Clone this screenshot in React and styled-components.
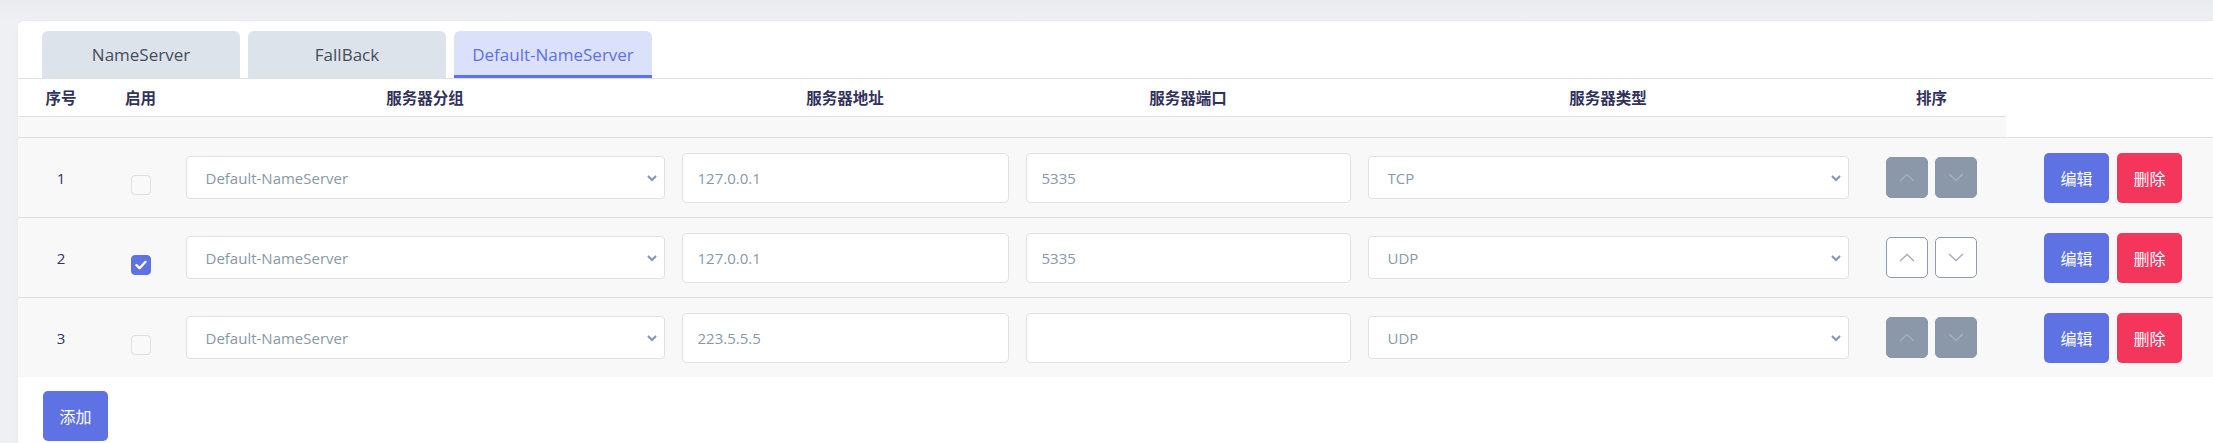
import React from "react";
import styled, { createGlobalStyle } from "styled-components";

const COLORS = {
  PRIMARY: "#5e72e4",
  DANGER: "#f5365c",
  TEXT: "#32325d",
  MUTED: "#8898aa",
  LINE: "#dee0e4",
  BORDER: "#dee2e6",
  ROW_BG: "#f8f8f9",
};

const COLS = "86px 73px 496px 344px 342px 498px 149px 1fr";

const GlobalStyle = createGlobalStyle`
  body {
    margin: 0;
    background: #edeff2;
    font-family: "Open Sans", "Noto Sans CJK SC", sans-serif;
  }
  * { box-sizing: border-box; }
`;

const Page = styled.div`
  min-height: 443px;
  padding: 21px 0 0 18px;
  background: linear-gradient(#e9ebee, #eef0f3 21px);
`;

const Card = styled.div`
  background: #fff;
  min-height: 422px;
  border-top-left-radius: 6px;
  box-shadow: 0 0 4px rgba(0, 0, 0, 0.03);
`;

const TabBar = styled.div`
  display: flex;
  gap: 8px;
  padding: 10px 24px 0;
  border-bottom: 1px solid ${COLORS.LINE};
`;

const Tab = styled.div`
  width: 198px;
  height: 47px;
  display: flex;
  align-items: center;
  justify-content: center;
  border-radius: 6px 6px 0 0;
  font-size: 17px;
  background: ${props => (props.$active ? "#dbe0fb" : "#dde3ea")};
  color: ${props => (props.$active ? COLORS.PRIMARY : "#454d5c")};
  border-bottom: 3px solid ${props => (props.$active ? COLORS.PRIMARY : "transparent")};
  padding-top: 3px;
`;

const Grid = styled.div`
  display: grid;
  grid-template-columns: ${COLS};
`;

const HeadCell = styled.div`
  height: 38px;
  display: flex;
  align-items: center;
  justify-content: center;
  font-size: 15.5px;
  font-weight: 600;
  color: ${COLORS.TEXT};
  border-bottom: ${props => (props.$blank ? "none" : `1px solid ${COLORS.LINE}`)};
`;

const BandCell = styled.div`
  height: 20px;
  background: ${props => (props.$blank ? "transparent" : COLORS.ROW_BG)};
`;

const Row = styled(Grid)`
  height: 80px;
  align-items: center;
  background: ${COLORS.ROW_BG};
  border-top: 1px solid ${COLORS.LINE};
`;

const Cell = styled.div`
  padding: 0 8.5px;
  display: flex;
  align-items: center;
  justify-content: ${props => props.$justify || "stretch"};
`;

const Num = styled.span`
  font-size: 15px;
  color: ${COLORS.TEXT};
`;

const CheckBox = styled.span`
  width: 20px;
  height: 20px;
  margin-top: 15px;
  border-radius: 4px;
  display: flex;
  align-items: center;
  justify-content: center;
  background: ${props => (props.$checked ? COLORS.PRIMARY : "#f9f9fa")};
  border: 1px solid ${props => (props.$checked ? COLORS.PRIMARY : "#dcdfe4")};
`;

const SelectWrap = styled.div`
  position: relative;
  width: 100%;
`;

const Select = styled.select`
  width: 100%;
  height: 43px;
  appearance: none;
  border: 1px solid ${COLORS.BORDER};
  border-radius: 4px;
  background: #fff;
  padding: 0 36px 0 19px;
  font-family: inherit;
  font-size: 15px;
  color: ${COLORS.MUTED};
  outline: none;
`;

const Caret = styled.svg`
  position: absolute;
  right: 7px;
  top: 50%;
  margin-top: -4px;
  pointer-events: none;
`;

const Input = styled.input`
  width: 100%;
  height: 50px;
  border: 1px solid ${COLORS.BORDER};
  border-radius: 5px;
  background: #fff;
  padding: 0 15px;
  font-family: inherit;
  font-size: 15px;
  color: ${COLORS.MUTED};
  outline: none;
`;

const SortGroup = styled.div`
  display: flex;
  gap: 7px;
`;

const SortButton = styled.button`
  width: 42px;
  height: 41px;
  padding: 0;
  border-radius: 5px;
  display: flex;
  align-items: center;
  justify-content: center;
  border: 1px solid ${props => (props.disabled ? "#8a98aa" : "#8f9bb0")};
  background: ${props => (props.disabled ? "#8a98aa" : "#fff")};
  color: ${props => (props.disabled ? "#a6b0bc" : "#a3abb7")};
`;

const Actions = styled.div`
  display: flex;
  gap: 8px;
  padding-left: 38px;
`;

const Button = styled.button`
  width: 65px;
  height: 50px;
  border: none;
  border-radius: 5px;
  font-family: inherit;
  font-size: 16px;
  color: #fff;
  background: ${props => (props.$danger ? COLORS.DANGER : COLORS.PRIMARY)};
`;

const Footer = styled.div`
  padding: 14px 25px;
`;

const Chevron = ({ up }) => (
  <svg width="16" height="9" viewBox="0 0 16 9" fill="none">
    <polyline
      points={up ? "1,8 8,1.5 15,8" : "1,1 8,7.5 15,1"}
      stroke="currentColor"
      strokeWidth="1.3"
    />
  </svg>
);

const rows = [
  { id: 1, on: false, group: "Default-NameServer", addr: "127.0.0.1", port: "5335", type: "TCP", up: false, down: false },
  { id: 2, on: true, group: "Default-NameServer", addr: "127.0.0.1", port: "5335", type: "UDP", up: true, down: true },
  { id: 3, on: false, group: "Default-NameServer", addr: "223.5.5.5", port: "", type: "UDP", up: false, down: false },
];

const heads = ["序号", "启用", "服务器分组", "服务器地址", "服务器端口", "服务器类型", "排序"];

function SelectBox({ value, options }) {
  return (
    <SelectWrap>
      <Select defaultValue={value}>
        {options.map(o => (
          <option key={o}>{o}</option>
        ))}
      </Select>
      <Caret width="12" height="8" viewBox="0 0 12 8" fill="none">
        <polyline points="2,2 6,6 10,2" stroke={COLORS.MUTED} strokeWidth="2.2" />
      </Caret>
    </SelectWrap>
  );
}

export default function App() {
  return (
    <>
      <GlobalStyle />
      <Page>
        <Card>
          <TabBar>
            <Tab>NameServer</Tab>
            <Tab>FallBack</Tab>
            <Tab $active>Default-NameServer</Tab>
          </TabBar>

          <Grid>
            {heads.map(h => (
              <HeadCell key={h}>{h}</HeadCell>
            ))}
            <HeadCell $blank />
          </Grid>
          <Grid>
            {heads.map(h => (
              <BandCell key={h} />
            ))}
            <BandCell $blank />
          </Grid>

          {rows.map(r => (
            <Row key={r.id}>
              <Cell $justify="center">
                <Num>{r.id}</Num>
              </Cell>
              <Cell $justify="center">
                <CheckBox $checked={r.on}>
                  {r.on && (
                    <svg width="12" height="10" viewBox="0 0 12 10">
                      <path d="M1.5 5.2 L4.6 8.2 L10.5 1.8" stroke="#fff" strokeWidth="2.4" fill="none" strokeLinecap="round" strokeLinejoin="round" />
                    </svg>
                  )}
                </CheckBox>
              </Cell>
              <Cell>
                <SelectBox value={r.group} options={["Default-NameServer", "NameServer", "FallBack"]} />
              </Cell>
              <Cell>
                <Input defaultValue={r.addr} />
              </Cell>
              <Cell>
                <Input defaultValue={r.port} />
              </Cell>
              <Cell>
                <SelectBox value={r.type} options={["UDP", "TCP", "TLS", "HTTPS"]} />
              </Cell>
              <Cell $justify="center">
                <SortGroup>
                  <SortButton disabled={!r.up}>
                    <Chevron up />
                  </SortButton>
                  <SortButton disabled={!r.down}>
                    <Chevron />
                  </SortButton>
                </SortGroup>
              </Cell>
              <Actions>
                <Button>编辑</Button>
                <Button $danger>删除</Button>
              </Actions>
            </Row>
          ))}

          <Footer>
            <Button>添加</Button>
          </Footer>
        </Card>
      </Page>
    </>
  );
}
